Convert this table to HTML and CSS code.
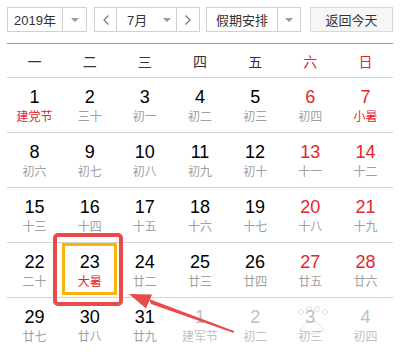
FILE: index.html
```html
<!DOCTYPE html>
<html lang="zh">
<head>
<meta charset="utf-8">
<link rel="stylesheet" href="styles.css">
</head>
<body>
<div class="page">
  <div class="toolbar">
    <div class="sel year">
      <span class="val">2019年</span>
      <span class="dd"><i class="caret"></i></span>
    </div>
    <div class="sel month">
      <span class="nav"><svg width="6" height="10" viewBox="0 0 6 10"><polyline points="5.5,0.5 1,5 5.5,9.5" fill="none" stroke="#777" stroke-width="1.2"/></svg></span>
      <span class="val mid">7月<i class="caret"></i></span>
      <span class="nav"><svg width="6" height="10" viewBox="0 0 6 10"><polyline points="0.5,0.5 5,5 0.5,9.5" fill="none" stroke="#777" stroke-width="1.2"/></svg></span>
    </div>
    <div class="sel hol">
      <span class="val">假期安排</span>
      <span class="dd"><i class="caret"></i></span>
    </div>
    <div class="btn">返回今天</div>
  </div>

  <div class="cal">
    <div class="head">
      <span>一</span><span>二</span><span>三</span><span>四</span><span>五</span><span class="red">六</span><span class="red">日</span>
    </div>
    <div class="week">
      <div class="d"><b>1</b><em class="fest">建党节</em></div>
      <div class="d"><b>2</b><em>三十</em></div>
      <div class="d"><b>3</b><em>初一</em></div>
      <div class="d"><b>4</b><em>初二</em></div>
      <div class="d"><b>5</b><em>初三</em></div>
      <div class="d we"><b>6</b><em>初四</em></div>
      <div class="d we"><b>7</b><em class="fest">小暑</em></div>
    </div>
    <div class="week">
      <div class="d"><b>8</b><em>初六</em></div>
      <div class="d"><b>9</b><em>初七</em></div>
      <div class="d"><b>10</b><em>初八</em></div>
      <div class="d"><b>11</b><em>初九</em></div>
      <div class="d"><b>12</b><em>初十</em></div>
      <div class="d we"><b>13</b><em>十一</em></div>
      <div class="d we"><b>14</b><em>十二</em></div>
    </div>
    <div class="week">
      <div class="d"><b>15</b><em>十三</em></div>
      <div class="d"><b>16</b><em>十四</em></div>
      <div class="d"><b>17</b><em>十五</em></div>
      <div class="d"><b>18</b><em>十六</em></div>
      <div class="d"><b>19</b><em>十七</em></div>
      <div class="d we"><b>20</b><em>十八</em></div>
      <div class="d we"><b>21</b><em>十九</em></div>
    </div>
    <div class="week">
      <div class="d"><b>22</b><em>二十</em></div>
      <div class="d picked"><b>23</b><em class="fest">大暑</em></div>
      <div class="d"><b>24</b><em>廿二</em></div>
      <div class="d"><b>25</b><em>廿三</em></div>
      <div class="d"><b>26</b><em>廿四</em></div>
      <div class="d we"><b>27</b><em>廿五</em></div>
      <div class="d we"><b>28</b><em>廿六</em></div>
    </div>
    <div class="week last">
      <div class="d"><b>29</b><em>廿七</em></div>
      <div class="d"><b>30</b><em>廿八</em></div>
      <div class="d"><b>31</b><em>廿九</em></div>
      <div class="d other"><b>1</b><em>建军节</em></div>
      <div class="d other"><b>2</b><em>初二</em></div>
      <div class="d other"><b>3</b><em>初三</em></div>
      <div class="d other"><b>4</b><em>初四</em></div>
    </div>
  </div>
</div>

<svg class="overlay" width="401" height="359" viewBox="0 0 401 359">
  <g class="wm" opacity="0.25" fill="none" stroke="#888" stroke-width="1">
    <circle cx="301" cy="312" r="2.5"/>
    <circle cx="309" cy="309" r="2.5"/>
    <circle cx="317" cy="309" r="2.5"/>
    <circle cx="325" cy="312" r="2.5"/>
    <path d="M300 330 Q312 312 324 330 Q312 338 300 330 Z"/>
  </g>
  <rect x="55" y="235" width="66" height="69" rx="3" ry="3" fill="none" stroke="#e94b4d" stroke-width="4"/>
  <polygon points="149,299 151,304 234,333 234,331" fill="#e94b4d"/>
  <polygon points="129,294 152,294.5 146,308.5" fill="#e94b4d"/>
</svg>
</body>
</html>
```

FILE: styles.css
```css
html, body {
  margin: 0;
  padding: 0;
  background: #fff;
}

body {
  font-family: "Liberation Sans", Arial, "Noto Sans CJK SC", sans-serif;
  color: #333;
  position: relative;
  width: 401px;
  height: 359px;
  overflow: hidden;
}

.page {
  padding: 7px 0 0 7px;
}

.toolbar {
  display: flex;
  height: 25px;
}

.sel {
  display: flex;
  box-sizing: border-box;
  height: 25px;
  border: 1px solid #d0d0d0;
  font-family: "Noto Sans CJK SC", sans-serif;
  font-size: 13px;
  color: #333;
}

.sel .val {
  display: flex;
  align-items: center;
  justify-content: center;
  font-family: "Liberation Sans", Arial, "Noto Sans CJK SC", sans-serif;
}

.sel .dd {
  display: flex;
  align-items: center;
  justify-content: center;
  border-left: 1px solid #d0d0d0;
  flex: 1;
}

.caret {
  display: inline-block;
  width: 0;
  height: 0;
  border-left: 4px solid transparent;
  border-right: 4px solid transparent;
  border-top: 4px solid #999;
}

.year {
  width: 80px;
}

.year .val {
  width: 54px;
}

.month {
  width: 106px;
  margin-left: 7px;
}

.month .nav {
  display: flex;
  align-items: center;
  justify-content: center;
}

.month .nav:first-child {
  width: 21px;
  border-right: 1px solid #d0d0d0;
}

.month .nav:last-child {
  width: 22px;
  border-left: 1px solid #d0d0d0;
}

.month .mid {
  width: 59px;
  justify-content: flex-start;
  padding-left: 10px;
  box-sizing: border-box;
}

.month .mid .caret {
  margin-left: 16px;
}

.hol {
  width: 95px;
  margin-left: 6px;
}

.hol .val {
  width: 70px;
}

.btn {
  box-sizing: border-box;
  width: 83px;
  height: 25px;
  margin-left: 9px;
  border: 1px solid #d8d8d8;
  background: #f6f6f6;
  display: flex;
  align-items: center;
  justify-content: center;
  font-family: "Noto Sans CJK SC", sans-serif;
  font-size: 13px;
  color: #333;
}

.cal {
  width: 386px;
  margin-top: 11px;
}

.head {
  display: grid;
  grid-template-columns: repeat(7, 1fr);
  height: 33px;
  border-top: 1px solid #6ea3e3;
  border-bottom: 1px solid #d3d3d3;
  align-items: center;
  text-align: center;
  font-family: "Noto Sans CJK SC", sans-serif;
  font-size: 14px;
  color: #333;
}

.head .red {
  color: #e3262b;
}

.week {
  display: grid;
  grid-template-columns: repeat(7, 1fr);
  height: 54px;
  border-bottom: 1px solid #d3d3d3;
}

.week.last {
  border-bottom: none;
}

.d {
  position: relative;
  text-align: center;
  padding-top: 9px;
}

.d b {
  display: block;
  font-weight: normal;
  font-size: 18px;
  line-height: 20px;
  color: #000;
}

.d em {
  display: block;
  font-style: normal;
  font-family: "Noto Sans CJK SC", sans-serif;
  font-size: 12px;
  line-height: 18px;
  color: #a0a0a0;
}

.d em.fest {
  color: #e3262b;
}

.d.we b {
  color: #e3262b;
}

.d.other b,
.d.other em {
  color: #c0c0c0;
}

.d.picked::after {
  content: "";
  position: absolute;
  left: 0;
  top: 0;
  right: 0;
  bottom: 2px;
  border: 3px solid #fbb20b;
}

.overlay {
  position: absolute;
  left: 0;
  top: 0;
  pointer-events: none;
}
```
